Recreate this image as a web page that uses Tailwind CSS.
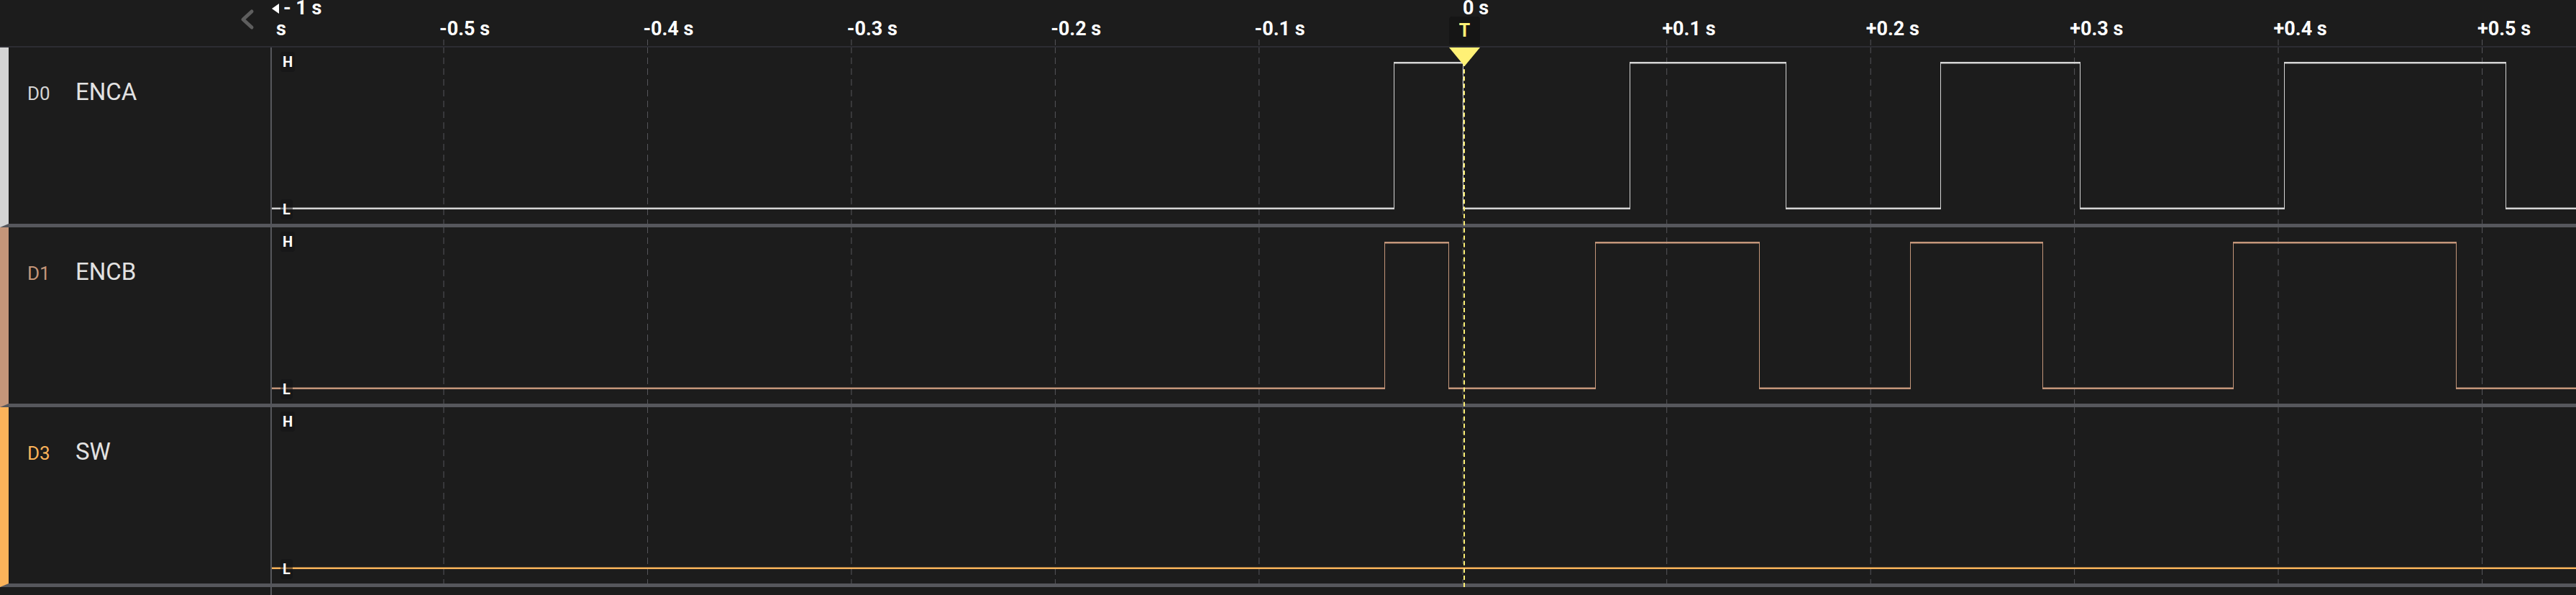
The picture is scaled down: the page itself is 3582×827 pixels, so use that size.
<!DOCTYPE html>
<html lang="en">
<head>
<meta charset="utf-8">
<meta name="viewport" content="width=device-width, initial-scale=1">
<title>Logic analyzer</title>
<script src="https://cdn.jsdelivr.net/npm/@tailwindcss/browser@4"></script>
</head>
<body class="flex min-h-screen flex-col overflow-x-hidden bg-[#1c1c1c] font-[Roboto,sans-serif] text-white">

<!-- Time ruler -->
<header class="flex h-[66px] border-b-2 border-[#2c2c32]">
  <div class="flex w-[378px] shrink-0 items-start justify-end pt-3 pr-6">
    <button type="button" aria-label="Collapse channel panel" class="block">
      <svg class="h-[30px] w-[20px]" viewBox="0 0 20 30" fill="none" stroke="#5e5e5e" stroke-width="5" stroke-linecap="round" stroke-linejoin="round"><path d="M16 4 4 15 16 26"/></svg>
    </button>
  </div>
  <div class="relative min-w-0 flex-1">
    <svg class="absolute inset-x-0 bottom-px h-2 w-full" viewBox="0 0 3204 8" preserveAspectRatio="none" aria-hidden="true">
      <path vector-effect="non-scaling-stroke" stroke="#55555a" d="M239 0V8M522.5 0V8M805.9 0V8M1089.4 0V8M1372.8 0V8M1939.7 0V8M2223.2 0V8M2506.6 0V8M2790 0V8M3073.5 0V8"/>
    </svg>
    <div class="-mt-[3px] grid grid-cols-[2330fr_repeat(10,2834fr)_1370fr] text-[27px]/[29px] font-bold whitespace-nowrap">
      <div class="min-w-0">
        <div class="flex items-center gap-1.5">
          <svg class="h-3.5 w-2.5" viewBox="0 0 10 14" fill="#fff" aria-hidden="true"><path d="M0 7 10 0V14Z"/></svg>
          <span>- 1 s</span>
        </div>
        <div class="pl-1.5">s</div>
      </div>
      <div class="min-w-0 pt-[29px]">-0.5 s</div>
      <div class="min-w-0 pt-[29px]">-0.4 s</div>
      <div class="min-w-0 pt-[29px]">-0.3 s</div>
      <div class="min-w-0 pt-[29px]">-0.2 s</div>
      <div class="min-w-0 pt-[29px]">-0.1 s</div>
      <div class="min-w-0 pl-1.5">0 s</div>
      <div class="min-w-0 pt-[29px]">+0.1 s</div>
      <div class="min-w-0 pt-[29px]">+0.2 s</div>
      <div class="min-w-0 pt-[29px]">+0.3 s</div>
      <div class="min-w-0 pt-[29px]">+0.4 s</div>
      <div class="min-w-0 pt-[29px]">+0.5 s</div>
    </div>
  </div>
</header>

<!-- Channels -->
<main class="relative">
  <section class="flex h-[250px] border-b-5 border-l-12 border-b-[#56575c] border-l-[#d4d4d4]">
    <div class="flex w-[366px] shrink-0 items-baseline gap-[37px] border-r-2 border-[#56575c] pt-[42px] pl-[26px]">
      <span class="w-[30px] text-[26px]/[39px] text-[#d4d4d4]">D0</span>
      <h2 class="text-[33px]/[39px] text-[#e2e2e2]">ENCA</h2>
    </div>
    <div class="relative min-w-0 flex-1">
      <svg class="block h-[245px] w-full" viewBox="0 0 3204 245" preserveAspectRatio="none" fill="none" role="img" aria-label="ENCA waveform">
        <defs><path id="grid" vector-effect="non-scaling-stroke" stroke="#55555a" stroke-dasharray="9 6" stroke-dashoffset="1" d="M239 0V245M522.5 0V245M805.9 0V245M1089.4 0V245M1372.8 0V245M1656 0V245M1939.7 0V245M2223.2 0V245M2506.6 0V245M2790 0V245M3073.5 0V245"/></defs>
        <use href="#grid"/>
        <g stroke="#d4d4d4">
          <path vector-effect="non-scaling-stroke" stroke-width="2.5" d="M0 223.75H1561M1560 21.25H1657M1656 223.75H1889M1888 21.25H2106M2105 223.75H2321M2320 21.25H2515M2514 223.75H2799M2798 21.25H3107M3106 223.75H3204"/>
          <path vector-effect="non-scaling-stroke" d="M1560.5 20V225M1656.5 20V225M1888.5 20V225M2105.5 20V225M2320.5 20V225M2514.5 20V225M2798.5 20V225M3106.5 20V225"/>
        </g>
      </svg>
      <div class="absolute top-1.5 left-3 flex h-[233px] flex-col items-start justify-between text-xl/7 font-bold">
        <span class="rounded bg-[#111114]/50 px-[3px]">H</span>
        <span class="rounded bg-[#111114]/50 px-[3px]">L</span>
      </div>
    </div>
  </section>

  <section class="flex h-[250px] border-b-5 border-l-12 border-b-[#56575c] border-l-[#c4967a]">
    <div class="flex w-[366px] shrink-0 items-baseline gap-[37px] border-r-2 border-[#56575c] pt-[42px] pl-[26px]">
      <span class="w-[30px] text-[26px]/[39px] text-[#c4967a]">D1</span>
      <h2 class="text-[33px]/[39px] text-[#e2e2e2]">ENCB</h2>
    </div>
    <div class="relative min-w-0 flex-1">
      <svg class="block h-[245px] w-full" viewBox="0 0 3204 245" preserveAspectRatio="none" fill="none" role="img" aria-label="ENCB waveform">
        <use href="#grid"/>
        <g stroke="#c4967a">
          <path vector-effect="non-scaling-stroke" stroke-width="2.5" d="M0 223.75H1548M1547 21.25H1637M1636 223.75H1841M1840 21.25H2069M2068 223.75H2279M2278 21.25H2463M2462 223.75H2728M2727 21.25H3038M3037 223.75H3204"/>
          <path vector-effect="non-scaling-stroke" d="M1547.5 20V225M1636.5 20V225M1840.5 20V225M2068.5 20V225M2278.5 20V225M2462.5 20V225M2727.5 20V225M3037.5 20V225"/>
        </g>
      </svg>
      <div class="absolute top-1.5 left-3 flex h-[233px] flex-col items-start justify-between text-xl/7 font-bold">
        <span class="rounded bg-[#111114]/50 px-[3px]">H</span>
        <span class="rounded bg-[#111114]/50 px-[3px]">L</span>
      </div>
    </div>
  </section>

  <section class="flex h-[250px] border-b-5 border-l-12 border-b-[#56575c] border-l-[#fbb35a]">
    <div class="flex w-[366px] shrink-0 items-baseline gap-[37px] border-r-2 border-[#56575c] pt-[42px] pl-[26px]">
      <span class="w-[30px] text-[26px]/[39px] text-[#fbb35a]">D3</span>
      <h2 class="text-[33px]/[39px] text-[#e2e2e2]">SW</h2>
    </div>
    <div class="relative min-w-0 flex-1">
      <svg class="block h-[245px] w-full" viewBox="0 0 3204 245" preserveAspectRatio="none" fill="none" role="img" aria-label="SW waveform">
        <use href="#grid"/>
        <path vector-effect="non-scaling-stroke" stroke="#fbb35a" stroke-width="2.5" d="M0 223.75H3204"/>
      </svg>
      <div class="absolute top-1.5 left-3 flex h-[233px] flex-col items-start justify-between text-xl/7 font-bold">
        <span class="rounded bg-[#111114]/50 px-[3px]">H</span>
        <span class="rounded bg-[#111114]/50 px-[3px]">L</span>
      </div>
    </div>
  </section>

  <!-- Trigger marker at t = 0 -->
  <div class="pointer-events-none absolute inset-y-0 right-0 left-[378px]">
    <div class="absolute inset-y-0 w-0" style="left:51.72%">
      <div class="absolute inset-y-0 left-0 border-l-2 border-dashed border-[#fff176]"></div>
      <svg class="absolute top-0 -left-5 h-[26px] w-[43px] max-w-none" viewBox="0 0 43 26" fill="#fff176" aria-hidden="true"><path d="M0 0H43L21.5 26Z"/></svg>
      <div class="absolute -top-[43px] -left-5 w-[43px] rounded bg-[#151515] text-center text-[25px]/[40px] font-bold text-[#fff176]">T</div>
    </div>
  </div>
</main>

<div class="flex flex-1">
  <div class="w-[378px] shrink-0 border-r-2 border-[#56575c]"></div>
</div>
</body>
</html>
